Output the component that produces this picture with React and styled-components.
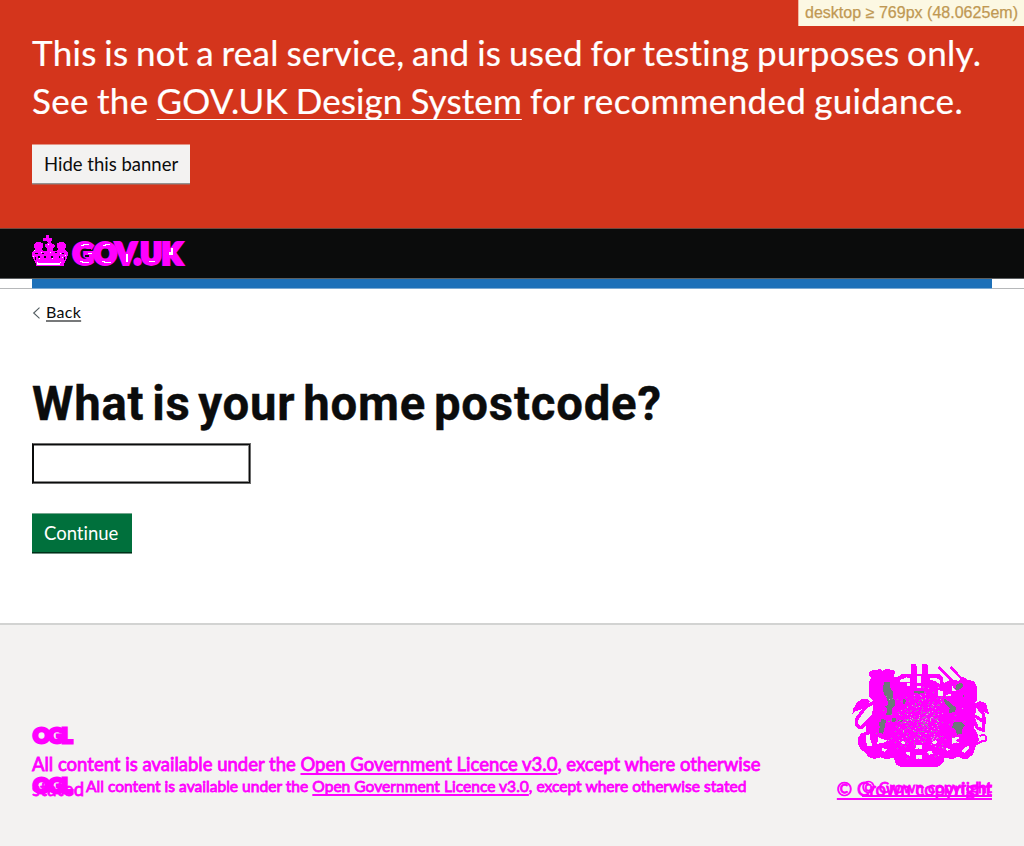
import React from "react";
import styled, { createGlobalStyle } from "styled-components";

const ink = "#0b0c0c";
const magenta = "#ff00ff";
const footerBg = "#f3f2f1";

const GlobalStyle = createGlobalStyle`
  html, body { margin: 0; padding: 0; background: #fff; }
  body {
    font-family: Lato, "Liberation Sans", sans-serif;
    font-variant-ligatures: none;
    color: ${ink};
    overflow: hidden;
  }
  *, *::before, *::after { box-sizing: border-box; }
`;

const Page = styled.div`
  display: flex;
  flex-direction: column;
  height: 846px;
`;

const Breakpoint = styled.div`
  position: absolute;
  top: 0;
  right: 0;
  height: 26px;
  padding: 0 6px 0 6px;
  border-left: 1px solid #f0b9a4;
  background: #fcf8e3;
  color: #c09853;
  font: 16px/25px "Liberation Sans", sans-serif;
  letter-spacing: 0.02px;
  -webkit-text-stroke: 0.25px #c09853;
`;

const Banner = styled.section`
  height: 228px;
  padding: 28px 32px 0;
  background: #d4351c;
  color: #fff;
`;

const BannerText = styled.p`
  margin: 0 -20px 0 0;
  font-size: 35px;
  line-height: 48px;
  white-space: nowrap;
  -webkit-text-stroke: 0.2px #fff;
`;

const BannerLine = styled.span`
  display: block;
  letter-spacing: ${(p) => p.$spacing};
  word-spacing: ${(p) => p.$words};
`;

const BannerLink = styled.a`
  color: inherit;
  letter-spacing: 0.12px;
  text-decoration: underline 1px;
  text-underline-offset: 5px;
  text-decoration-skip-ink: none;
`;

const Button = styled.button`
  display: block;
  width: ${(p) => p.$width};
  height: 39px;
  margin: ${(p) => p.$margin};
  padding: 0 0 1px 12px;
  border: 0;
  border-top: 1px solid ${(p) => p.$edge};
  background: ${(p) => p.$bg};
  color: ${(p) => p.$color};
  box-shadow: 0 1px 0 ${(p) => p.$shadow}, 0 2px 0 ${(p) => p.$shadowEnd};
  font: 18.5px/36px Lato, sans-serif;
  font-variant-ligatures: none;
  text-align: left;
  white-space: nowrap;
`;

const Header = styled.header`
  height: 51px;
  padding: 6px 32px 0;
  border-top: 1px solid #70483e;
  border-bottom: 1px solid #5c6062;
  background: ${ink};
`;

const HomeLink = styled.a`
  display: flex;
  align-items: flex-start;
  gap: 5px;
  text-decoration: none;
`;

const Wordmark = styled.span`
  color: ${magenta};
  font-size: 28px;
  font-weight: 900;
  line-height: 36px;
  letter-spacing: 0.4px;
  -webkit-text-stroke: 3.8px ${magenta};
  position: relative;
`;

const Glints = styled.svg`
  position: absolute;
  left: 0;
  top: 0;
`;

const BlueBar = styled.div`
  height: 10px;
  padding: 0 32px;
  border-bottom: 1px solid #b6b8ba;
  &::after {
    content: "";
    display: block;
    height: 10px;
    background: #1d70b8;
    border-bottom: 1px solid #7ba9d2;
  }
`;

const Main = styled.main`
  flex: 1;
  padding: 14px 32px 0;
`;

const BackLink = styled.a`
  display: flex;
  align-items: center;
  gap: 5px;
  height: 20px;
  color: ${ink};
  font-size: 16px;
  line-height: 20px;
`;

const BackText = styled.span`
  height: 20px;
  line-height: 18px;
  letter-spacing: 0.3px;
  text-decoration: underline 2px #77797a;
  text-underline-offset: 2px;
  text-decoration-skip-ink: none;
`;

const Title = styled.h1`
  margin: 54px 0 0;
  font-family: Roboto, Lato, sans-serif;
  font-size: 47.3px;
  font-weight: 700;
  line-height: 55px;
  letter-spacing: 0.8px;
  word-spacing: -4.8px;
  -webkit-text-stroke: 0.4px ${ink};
`;

const Field = styled.input`
  display: block;
  width: 219px;
  height: 41px;
  margin: 11px 0 0;
  padding: 5px;
  border: 1px solid #6d6d6d;
  border-left-color: ${ink};
  border-radius: 0;
  outline: 0;
  background: #fff;
  box-shadow:
    inset 1px 0 ${ink},
    inset -1px 0 ${ink},
    inset 0 1px ${ink},
    inset 0 -1px ${ink},
    inset -2px -2px #8a8a8a,
    inset 0 2px #8a8a8a;
`;

const Footer = styled.footer`
  height: 223px;
  padding: 39px 32px 0;
  border-top: 2px solid #d2d3d2;
  background: ${footerBg};
  color: ${magenta};
  display: flex;
  justify-content: space-between;
`;

const Licence = styled.div`
  position: relative;
  width: 760px;
  padding-top: 58px;
  font-size: 18.5px;
  line-height: 25px;
`;

const Logo = styled.div`
  height: 30px;
  padding-left: 1px;
  font-size: 21px;
  font-weight: 900;
  line-height: 25px;
  letter-spacing: -1.9px;
  -webkit-text-stroke: 3px ${magenta};
`;

const OverLogo = styled(Logo)`
  position: absolute;
  left: 0;
  top: 108px;
`;

const Line = styled.p`
  margin: 0;
  white-space: nowrap;
  -webkit-text-stroke: 0.8px ${magenta};
`;

const Wrapped = styled.span`
  letter-spacing: 0.35px;
`;

const SmallLine = styled(Line)`
  position: absolute;
  left: 54px;
  top: 110px;
  font-size: 15.6px;
  line-height: 25px;
`;

const FooterLink = styled.a`
  text-decoration: underline 2px;
  text-underline-offset: 2px;
  text-decoration-skip-ink: none;
`;

const Copyright = styled.div`
  position: relative;
  width: 156px;
  text-align: right;
`;

const CrestArt = styled.svg`
  display: block;
  margin: 0 2px 9px auto;
`;

const CopyLine = styled(Line)`
  font-size: 18.5px;
  line-height: 25px;
`;

const SmallCopy = styled(Line)`
  position: absolute;
  right: 0;
  top: 111px;
  font-size: 15.5px;
  line-height: 25px;
`;

function Crown() {
  return (
    <svg width="36" height="31" viewBox="96 45 108 93" shapeRendering="crispEdges">
      <path
        fill={magenta}
        d="M139 45H148V54H157V63H152V69L163 73L166 80L160 85L157 93L168 93L176 88L170 81L172 70L182 66L192 67L199 74L199 82L194 88L202 94L204 103L201 114L194 126L192 137H108L106 126L98 114L96 103L98 94L106 88L101 82L101 74L108 67L118 66L128 70L130 81L124 88L132 93L143 93L140 85L134 80L136 73L145 69L139 63H130V54H139Z"
      />
      <path
        fill={ink}
        d="M106 98h8v3h-8zM126 99h5v3h-5zM165 97h5v3h-5zM185 98h7v3h-7zM115 108h5v5h-5zM132 108h6v5h-6zM154 108h6v5h-6zM176 107h5v6h-5zM105 112h3v8h-3zM193 110h3v9h-3z"
      />
      <path
        fill="#fff"
        d="M103 91h3v3h-3zM99 109h3v3h-3zM124 97h3v3h-3zM145 72h3v3h-3zM151 96h3v3h-3zM180 100h3v3h-3zM118 115h3v3h-3zM157 113h3v3h-3zM187 112h3v3h-3zM112 129h68v5h-68zM110 126h3v4h-3zM180 125h3v4h-3zM194 104h3v3h-3z"
      />
    </svg>
  );
}

function WordGlints() {
  return (
    <Glints width="114" height="37" viewBox="72 235 114 37" shapeRendering="crispEdges">
      <path
        fill="#fff"
        d="M82 244h6v1h-6zM80 245h3v1h-3zM79 261h3v1h-3zM81 262h7v1h-7zM87 253h4v1h-4zM104 244h5v1h-5zM102 245h3v1h-3zM101 261h3v1h-3zM103 262h7v1h-7zM125 254h2v8h-2zM148 261h6v1h-6zM168 252h4v3h-4zM170 248h2v4h-2z"
      />
      <path fill={ink} d="M84 249h6v2h-6zM84 255h4v2h-4zM104 249h3v8h-3z" />
    </Glints>
  );
}

// Small marks scattered over the crest, denser toward the shield.
function crestMarks() {
  const marks = [];
  let seed = 17;
  const next = () => {
    seed = (seed * 16807) % 2147483647;
    return seed / 2147483647;
  };
  for (let i = 0; i < 300; i += 1) {
    const spread = i < 170 ? 0.55 : 1;
    const x = 266 + (next() + next() - 1) * 145 * spread;
    const y = 210 + (next() + next() - 1) * 135 * (spread + 0.1);
    const dx = (x - 266) / 145;
    const dy = (y - 215) / 128;
    if (dx * dx + dy * dy < 1 && y > 105) {
      marks.push([Math.round(x / 3) * 3 + 2, Math.round(y / 3) * 3 + 2, i % 3]);
    }
  }
  return marks;
}

function Crest() {
  return (
    <CrestArt width="138" height="104" viewBox="65 41 414 312" shapeRendering="crispEdges">
      <g fill={magenta}>
        <path
          d="M126 59L150 57L156 62L164 57L190 58L195 66L190 75L194 82L206 78L215 71L240 70L294 70L325 70L337 80L340 98L352 92L365 87L385 92L398 80L412 88L430 92L440 108L441 150L434 158L438 182L430 200L438 215L430 232L440 246L446 268L436 290L428 312L412 325L398 327L384 319L366 327L343 321L340 335L326 348L310 351L212 350L197 342L190 322L168 327L150 321L130 326L112 318L104 305L94 300L84 284L84 262L92 250L106 245L108 225L122 200L128 175L130 152L117 140L117 92L122 83L114 74L118 65Z"
        />
        <path d="M241 42h15l3 5v33h-18zM276 42h15l3 5v33h-18z" />
        <path d="M66 190l3-15 10-17 16-13 16 2 8 7-15 17-18 9-12 3zM432 160l18-8 17 8 10 33-15-8-16-6-9-6z" />
      </g>
      <g fill="none" stroke={magenta}>
        <path strokeWidth="7" d="M325 50l42 43M361 50l40 42" />
        <path strokeWidth="10" d="M150 158Q135 190 118 208L92 232Q70 226 82 202L108 168L132 156M410 170L430 195L460 214L458 240L440 232L430 205M434 160L460 192L462 220" />
        <path strokeWidth="6" d="M448 258q16-10 20 3q3 13-13 12l-18 9" />
      </g>
      <g fill={footerBg}>
        <path d="M210 89l18-8 12 2v12h-32zM299 83l18-1 12 8v12l-15-10-15-3zM261 78h12v20h-12zM231 99h8v8h-8zM260 106h13v7h-13zM324 120l14 2v14h-14zM364 103l7 13 8 6h-14zM347 134l15-4v8h-13zM108 255l12-4v18l6 16-14 3-6-16zM143 260l18 8 12 3-15 7-17 2zM365 263l22-4v6l-13 4 12 8-22 3zM400 294l17-9-3 13-10 9-10-3zM257 284h18v13h-20zM258 315h17v10h-18zM229 304l12 3-3 9-12-6zM291 304l12-2 4 8-14 5zM156 294l15 2-8 8-8-3zM347 293l12 4-9 7zM211 277l8-6 7 7-7 4zM305 275l12-7 4 9-10 5z" />
      </g>
      <g fill="#6f777b">
        <path d="M161 96h18v15l9 13v19l6 9v13l-8 9v21l-18-2 2-19-5-6 9-5-4-18-8-12-5-18zM186 203h13l-5 12h-8zM152 205l15 5-3 16-6 24-13-3 3-18-4-11 8-5zM378 103l14-7 8 7-4 9-15 8-6-5zM341 145l13 7 9 9 14 10-3 15-18 1 2-14-15-13zM372 214l21 1 10 10-8 12v14l-14 2-7-17-10-4zM217 145l10 3-3 15-7-5zM250 121h32v6l-15 3-17-3zM400 132l3 5-6 5zM202 210l14-3 4 5-8 3z" />
      </g>
      {crestMarks().map(([x, y, tone], i) => (
        <rect key={i} x={x} y={y} width="3" height="3" fill={tone === 0 ? "#c9b9c9" : "#969b9d"} />
      ))}
    </CrestArt>
  );
}

export default function App() {
  return (
    <Page>
      <GlobalStyle />
      <Banner>
        <BannerText>
          <BannerLine $spacing="0.29px" $words="-1.6px">
            This is not a real service, and is used for testing purposes only.
          </BannerLine>
          <BannerLine $spacing="0.33px" $words="-1.2px">
            See the <BannerLink>GOV.UK Design System</BannerLink> for recommended guidance.
          </BannerLine>
        </BannerText>
        <Button
          $width="158px"
          $margin="20px 0 0"
          $bg="#f3f2f1"
          $color={ink}
          $edge="#e39485"
          $shadow="#929191"
          $shadowEnd="#b35b4b"
        >
          Hide this banner
        </Button>
      </Banner>
      <Header>
        <HomeLink>
          <Crown />
          <Wordmark>
            GOV.UK
            <WordGlints />
          </Wordmark>
        </HomeLink>
      </Header>
      <BlueBar />
      <Main>
        <BackLink>
          <svg width="9" height="12" viewBox="0 0 9 12" fill="none" stroke="#505a5f" strokeWidth="1.1">
            <path d="M7.5 0.7L1.7 6l5.8 5.3" />
          </svg>
          <BackText>Back</BackText>
        </BackLink>
        <Title>What is your home postcode?</Title>
        <Field aria-label="Postcode" />
        <Button
          $width="100px"
          $margin="29px 0 0"
          $bg="#00703c"
          $color="#fff"
          $edge="#73a68d"
          $shadow="#003019"
          $shadowEnd="#6f8f80"
        >
          Continue
        </Button>
      </Main>
      <Footer>
        <Licence>
          <Logo>OGL</Logo>
          <Line>
            All content is available under the <FooterLink>Open Government Licence v3.0</FooterLink>, except where otherwise
            <br />
            <Wrapped>stated</Wrapped>
          </Line>
          <OverLogo>OGL</OverLogo>
          <SmallLine>
            All content is available under the <FooterLink>Open Government Licence v3.0</FooterLink>, except where otherwise stated
          </SmallLine>
        </Licence>
        <Copyright>
          <Crest />
          <CopyLine>
            <FooterLink>© Crown copyright</FooterLink>
          </CopyLine>
          <SmallCopy>
            <FooterLink>© Crown copyright</FooterLink>
          </SmallCopy>
        </Copyright>
      </Footer>
      <Breakpoint>desktop ≥ 769px (48.0625em)</Breakpoint>
    </Page>
  );
}
